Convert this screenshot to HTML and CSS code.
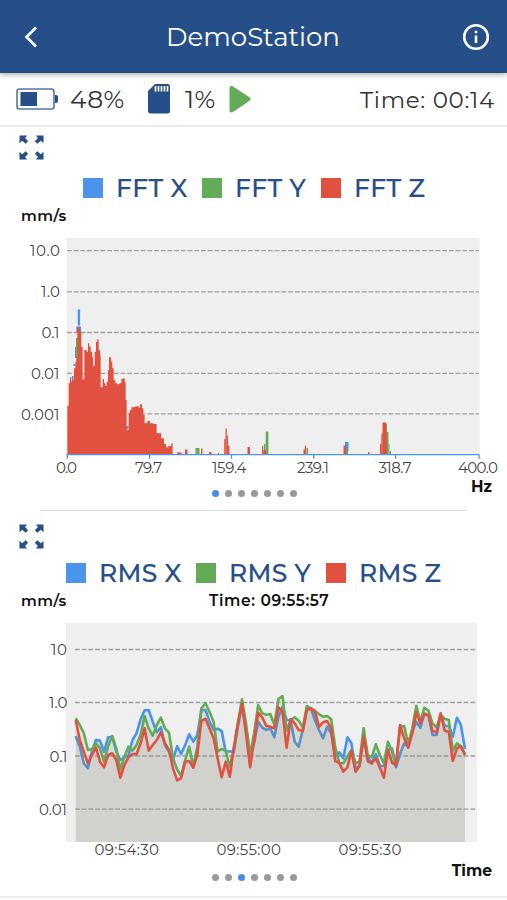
FILE: index.html
```
<!DOCTYPE html>
<html lang="en">
<head>
    <meta charset="utf-8">
    <title>DemoStation</title>
    <link rel="stylesheet" href="styles.css">
</head>
<body>
    <header class="topbar">
        <svg class="back" width="14" height="24" viewBox="0 0 14 24"><path d="M12 2.5 2.5 12 12 21.5"/></svg>
        <h1>DemoStation</h1>
        <svg class="info" width="28" height="28" viewBox="0 0 28 28">
            <circle cx="14" cy="14" r="11.8"/>
            <path d="M14 12.5V20M14 7.7v2.6"/>
        </svg>
    </header>

    <div class="status">
        <svg class="battery" width="43" height="22" viewBox="0 0 43 22">
            <rect class="shell" x="1" y="1" width="37" height="20" rx="2.5"/>
            <rect x="4.5" y="4" width="16.5" height="14"/>
            <path d="M39 7h1q2 0 2 2v4q0 2-2 2h-1z"/>
        </svg>
        <span class="num battery-num">48%</span>
        <svg class="card" width="22" height="30" viewBox="0 0 22 30">
            <path class="body" d="M7 0h12.500q2.500 0 2.500 2.500v24.500q0 2.500-2.500 2.500h-17q-2.500 0-2.500-2.500v-20z"/>
            <path class="pins" d="M7.500 2v5.500M10.500 2v5.500M13.500 2v5.500M16.500 2v5.500M19.500 2v5.500"/>
        </svg>
        <span class="num card-num">1%</span>
        <svg class="play" width="22" height="28" viewBox="0 0 22 28"><path d="M2.500 3v22.500L19.500 14z"/></svg>
        <span class="elapsed">Time: 00:14</span>
    </div>

    <section class="panel fft">
        <svg class="expand" width="25" height="25" viewBox="0 0 26 26">
            <g id="arrow"><path d="M.5.5h8L6.300 3 9.500 6.500 7 9 3.200 6 .5 8.500z"/></g>
            <use href="#arrow" transform="matrix(-1 0 0 1 26 0)"/>
            <use href="#arrow" transform="matrix(1 0 0 -1 0 26)"/>
            <use href="#arrow" transform="rotate(180 13 13)"/>
        </svg>
        <div class="legend">
            <span class="x">FFT X</span>
            <span class="y">FFT Y</span>
            <span class="z">FFT Z</span>
        </div>
        <div class="caption"><span class="unit">mm/s</span></div>
        <svg class="chart" width="507" height="244" viewBox="0 232 507 244">
            <rect class="plot" x="66.500" y="238" width="413" height="217"/>
            <path class="grid" d="M67 250.700H479M67 291.800H479M67 332.500H479M67 373.300H479M67 413.800H479"/>
            <g id="bars"></g>
            <path class="axis" d="M66.500 454.700h413M67.300 454.700v4M149.600 454.700v4M231.500 454.700v4M313.700 454.700v4M395.700 454.700v4M479 454.700v4"/>
            <g class="labels">
                <text x="30" y="256.200" textLength="30">10.0</text>
                <text x="41" y="297.200" textLength="19">1.0</text>
                <text x="41.500" y="338" textLength="18">0.1</text>
                <text x="31" y="378.500" textLength="28.500">0.01</text>
                <text x="21" y="419.500" textLength="38.500">0.001</text>
                <text x="56" y="473" textLength="21">0.0</text>
                <text x="135" y="473" textLength="27">79.7</text>
                <text x="212" y="473" textLength="34.500">159.4</text>
                <text x="297" y="473" textLength="32">239.1</text>
                <text x="378.500" y="473" textLength="33">318.7</text>
                <text x="458" y="473" textLength="40">400.0</text>
            </g>
        </svg>
        <div class="footer">
            <div class="dots"><i class="on"></i><i></i><i></i><i></i><i></i><i></i><i></i></div>
            <span class="axis-name">Hz</span>
        </div>
    </section>

    <section class="panel rms">
        <svg class="expand" width="25" height="25" viewBox="0 0 26 26">
            <use href="#arrow"/>
            <use href="#arrow" transform="matrix(-1 0 0 1 26 0)"/>
            <use href="#arrow" transform="matrix(1 0 0 -1 0 26)"/>
            <use href="#arrow" transform="rotate(180 13 13)"/>
        </svg>
        <div class="legend">
            <span class="x">RMS X</span>
            <span class="y">RMS Y</span>
            <span class="z">RMS Z</span>
        </div>
        <div class="caption"><span class="unit">mm/s</span><span class="cursor-time">Time: 09:55:57</span></div>
        <svg class="chart" width="507" height="244" viewBox="0 616 507 244">
            <rect class="plot" x="66" y="623" width="411" height="219"/>
            <path class="grid" d="M75 649.500H476.500M75 702.500H476.500M75 756H476.500M75 809.200H476.500"/>
            <g id="lines"></g>
            <g class="labels">
                <text x="51" y="655" textLength="16">10</text>
                <text x="49" y="708" textLength="18.500">1.0</text>
                <text x="49.500" y="761.500" textLength="18">0.1</text>
                <text x="39" y="814.500" textLength="28">0.01</text>
                <text x="94.500" y="855" textLength="64.500">09:54:30</text>
                <text x="216.500" y="855" textLength="64.500">09:55:00</text>
                <text x="338.500" y="855" textLength="63">09:55:30</text>
            </g>
        </svg>
        <div class="footer">
            <div class="dots"><i></i><i></i><i class="on"></i><i></i><i></i><i></i><i></i></div>
            <span class="axis-name">Time</span>
        </div>
    </section>

    <script src="charts.js"></script>
</body>
</html>
```
FILE: styles.css
```
*, *:before, *:after {
    box-sizing: border-box;
}
body {
    margin: 0;
    width: 507px;
    height: 900px;
    overflow: hidden;
    background: #fff;
    font-family: Montserrat, Inter, sans-serif;
    color: #333;
}
svg {
    display: block;
    flex: none;
}
.topbar {
    position: relative;
    display: flex;
    align-items: center;
    justify-content: space-between;
    height: 73px;
    padding: 0 17px 0 24px;
    background: #264e89;
    box-shadow: 0 1px 6px rgba(0, 0, 0, 0.4);
}
.topbar h1 {
    margin: 1px 0 0 6px;
    font-size: 26px;
    font-weight: 400;
    color: #fff;
}
.topbar svg {
    fill: none;
    stroke: #fff;
    stroke-width: 2.6;
}
.back {
    margin-top: 1px;
}
.info {
    margin-top: 1px;
}
.status {
    display: flex;
    align-items: center;
    height: 54px;
    padding: 0 13px 0 16px;
    border-bottom: 2px solid #ebebeb;
}
.battery, .card {
    fill: #264e89;
}
.battery .shell {
    fill: none;
    stroke: #5675a8;
    stroke-width: 1.6;
}
.card {
    margin-right: 15px;
}
.pins {
    stroke: #fff;
    stroke-width: 1.7;
}
.num {
    font-size: 25px;
    font-weight: 400;
    letter-spacing: 0.5px;
}
.battery-num {
    width: 78px;
    margin-left: 11px;
}
.card-num {
    width: 44px;
}
.play {
    fill: #64ab58;
    stroke: #64ab58;
    stroke-width: 4;
    stroke-linejoin: round;
}
.elapsed {
    margin: 2px -1px 0 auto;
    font-size: 23px;
    font-weight: 400;
    letter-spacing: 0.7px;
}
.panel {
    height: 384px;
    padding-top: 8px;
}
.rms {
    position: relative;
    height: 387px;
    padding-top: 13px;
    border-bottom: 2px solid #ebebeb;
}
/* short rule between the two charts */
.rms:before {
    content: '';
    position: absolute;
    top: -1px;
    left: 40px;
    width: 428px;
    height: 1px;
    background: #dcdcdc;
}
.expand {
    margin-left: 19px;
    fill: #264e89;
}
.legend {
    display: flex;
    height: 28px;
    margin-top: 14px;
    padding-left: 83px;
}
.rms .legend {
    margin-top: 10px;
    padding-left: 66px;
}
.legend span {
    display: flex;
    align-items: center;
    width: 119px;
    font-size: 25px;
    font-weight: 500;
    letter-spacing: 0.3px;
    color: #264e89;
    -webkit-text-stroke: 0.2px #264e89;
    white-space: nowrap;
}
.rms .legend span {
    width: 130px;
}
.legend span:before {
    content: '';
    width: 20px;
    height: 20px;
    margin-right: 13px;
}
.legend .x:before {
    background: #4a94ea;
}
.legend .y:before {
    background: #64ab58;
}
.legend .z:before {
    background: #e2503f;
}
.caption {
    display: flex;
    height: 30px;
    padding: 4px 0 0 21px;
    font-size: 15px;
    font-weight: 600;
    line-height: 20px;
    color: #111;
}
.rms .caption {
    height: 29px;
}
.unit {
    width: 188px;
    letter-spacing: 0.4px;
}
.cursor-time {
    font-size: 15.5px;
    letter-spacing: 0.6px;
}
.plot {
    fill: #efefef;
}
.grid {
    stroke: #a0a0a0;
    stroke-width: 1.3;
    stroke-dasharray: 4.8 1.9;
}
.axis {
    fill: none;
    stroke: #4a94ea;
    stroke-width: 1.3;
}
.labels {
    font-size: 15px;
    fill: #444;
}
.footer {
    display: grid;
    grid-template-columns: 211.500px 1fr auto;
    padding-right: 15px;
}
.dots {
    grid-column: 2;
    display: flex;
    gap: 6px;
    padding-top: 14px;
}
.dots i {
    width: 7px;
    height: 7px;
    border-radius: 50%;
    background: #999;
}
.dots .on {
    background: #438fe8;
}
.axis-name {
    font-size: 15.5px;
    font-weight: 700;
    line-height: 21px;
    color: #111;
}
.line {
    fill: none;
    stroke-width: 2.6;
    stroke-linejoin: round;
}
```
FILE: charts.js
```
var BLUE = '#4a94ea', GREEN = '#64ab58', RED = '#e2503f';

function add(parent, name, attrs) {
    var el = document.createElementNS('http://www.w3.org/2000/svg', name);
    for (var key in attrs) el.setAttribute(key, attrs[key]);
    parent.appendChild(el);
}

// Spectrum: thin bins of the other axes first: x, top, width, height
var bars = document.getElementById('bars');
[
    [77.7, 309.5, 2.4, 16, BLUE], [76.3, 326.5, 4.8, 6, BLUE],
    [75, 347, 2, 11, '#45a5b5'], [76, 338, 2, 20, GREEN], [72, 376, 1.600, 8, BLUE],
    [73.5, 364, 1.500, 2, BLUE], [126, 426, 2.5, 3, BLUE],
    [195.5, 448, 4, 6.5, GREEN], [264, 444, 1.500, 11, GREEN], [265.7, 431.5, 2.700, 23, GREEN],
    [306.5, 448, 1.700, 7, GREEN], [345, 442, 3.500, 9, BLUE], [346, 450, 2, 5, GREEN],
    [385, 424, 2, 30, GREEN], [387, 432, 1.500, 22, GREEN], [388.5, 444, 1, 10, GREEN], [389.5, 451, 1.500, 3, GREEN],
    [177, 452.5, 4.500, 2, RED], [185, 449.500, 2.500, 5, RED], [201, 448.500, 1.400, 6, RED], [209, 452, 2.500, 2, RED], [218, 453, 1, 1.500, RED],
    [224.2, 439, 1.500, 16, RED], [225.5, 428.500, 1.300, 26, RED], [226.800, 435.500, 1.200, 19, RED], [228, 445.500, 1.400, 9, RED],
    [247.5, 447, 2.500, 8, RED], [262, 446, 1.300, 9, RED], [263.300, 450, 2.700, 5, RED],
    [303.5, 449.500, 1.500, 5, RED], [304.800, 445.500, 1.300, 9, RED], [343.5, 445.500, 2.500, 9, RED], [368, 452, 1.500, 2.500, RED],
    [380, 444, 1.500, 10.500, RED], [381.300, 433.500, 1.400, 21, RED], [382.500, 422.500, 3.700, 32, RED], [386, 433, .8, 21, RED]
].forEach(function(b) {
    add(bars, 'rect', { x: b[0], y: b[1], width: b[2], height: b[3], fill: b[4] });
});

// Z envelope as steps, three units per pixel
var steps = [22,317, 26,250, 30,232, 34,245, 38,240, 42,205, 46,185, 49,172, 52,80, 58,85, 60,97, 64,140, 68,238, 73,150, 80,155, 84,130,
    88,140, 92,155, 96,170, 99,198, 104,155, 108,125, 112,118, 116,150, 120,165, 122,262, 128,237, 132,250, 136,258, 140,245,
    144,210, 147,172, 153,185, 157,205, 161,240, 166,250, 172,253, 178,250, 184,237, 190,235, 194,245, 197,300, 200,390,
    206,340, 209,330, 214,322, 222,320, 230,318, 236,323, 240,313, 246,325, 250,345, 254,370, 262,363, 270,370, 280,372,
    290,400, 298,400, 304,415, 312,432, 318,442, 325,438, 334,430, 338,463];
var d = 'M22 465';
for (var i = 0; i < steps.length; i += 2) {
    d += 'H' + steps[i] + 'V' + steps[i + 1];
}
add(bars, 'path', { d: d + 'V465Z', fill: RED, transform: 'translate(60 300) scale(.3333)' });

// RMS history, same units, one value per sample
var series = [
    { color: BLUE, shade: BLUE, data: [168,200,250,265,215,179,182,215,172,170,215,240,232,226,180,160,118,91,90,125,157,142,195,215,240,198,222,195,163,
        185,165,90,90,125,150,146,153,215,214,215,140,75,140,225,190,125,143,150,145,172,110,80,120,120,185,200,150,90,85,120,150,175,
        140,160,230,217,235,172,190,265,258,170,230,250,222,258,258,210,205,262,222,190,200,155,125,143,100,107,165,165,105,137,138,170,113,135,207] },
    { color: GREEN, shade: '#74a850', data: [115,135,160,210,208,190,205,245,198,168,205,270,230,200,212,195,165,108,145,167,135,113,145,158,235,268,288,240,200,
        260,200,85,70,95,125,215,207,212,262,205,130,58,130,225,160,75,100,104,102,135,57,48,152,120,112,122,143,78,85,92,103,110,
        108,118,200,250,250,230,210,250,245,145,225,232,193,225,250,185,215,255,140,138,192,145,77,125,83,92,130,143,105,116,120,212,190,200,222] },
    { color: RED, shade: '#c46a45', data: [120,180,215,250,225,203,245,262,225,220,240,293,255,232,222,223,190,145,212,195,180,157,190,210,265,301,295,245,243,
        263,225,122,117,145,175,235,292,245,290,205,130,72,160,262,180,98,112,138,140,145,82,95,203,118,130,150,153,90,85,95,140,127,
        123,145,243,248,275,262,212,275,258,168,243,250,235,262,293,210,248,255,135,175,203,160,97,130,102,105,152,158,100,152,155,243,205,198,225] }
];
var lines = document.getElementById('lines');
series.forEach(function(s) {
    var points = s.data.map(function(v, i) {
        return (75.7 + i * 4.055).toFixed(1) + ',' + (680 + v / 3).toFixed(1);
    }).join(' ');
    add(lines, 'polygon', { points: '75.7,842 ' + points + ' 465,842', fill: s.shade, 'fill-opacity': .1 });
    add(lines, 'polyline', { points: points, stroke: s.color, 'class': 'line' });
});
```
